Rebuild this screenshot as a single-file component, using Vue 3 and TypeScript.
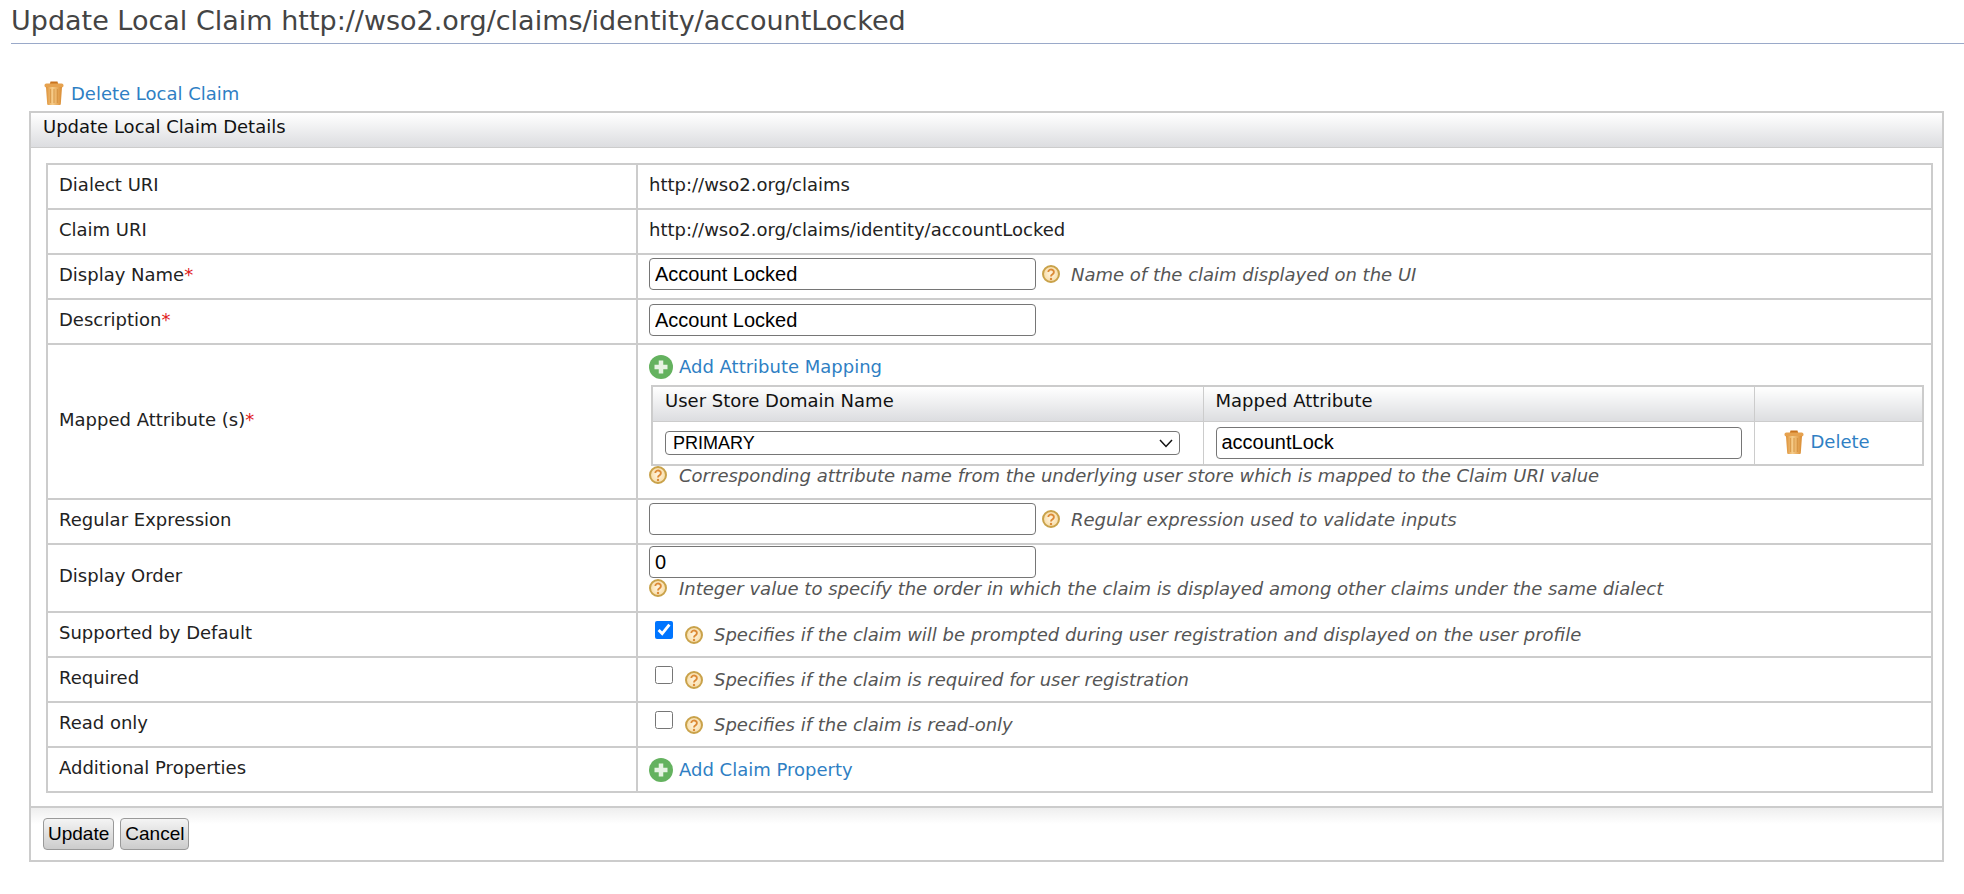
<template>
  <div class="page">
    <h2 class="title">Update Local Claim http://wso2.org/claims/identity/accountLocked</h2>
    <div class="content">
      <a class="link trash-link delete-claim">
        <svg class="trash" viewBox="0 0 20 24"><use href="#trash-icon" /></svg>
        Delete Local Claim
      </a>
      <svg class="defs" width="0" height="0">
        <defs>
          <linearGradient id="trash-body" x1="0" x2="1" y1="0" y2="0">
            <stop offset="0" stop-color="#dc8f35" />
            <stop offset="0.4" stop-color="#f6cd8b" />
            <stop offset="1" stop-color="#d98a30" />
          </linearGradient>
          <radialGradient id="help-fill">
            <stop offset="0" stop-color="#fff6e2" />
            <stop offset="1" stop-color="#f8dca6" />
          </radialGradient>
          <symbol id="trash-icon" viewBox="0 0 20 24">
            <path d="M6.500 .5h7l.8 3H5.700z" fill="#c9741f" />
            <rect x="0.5" y="2.500" width="19" height="4" rx="1.800" fill="#e6a24f" />
            <path d="M2 6h16l-1.200 17a1 1 0 0 1-1 1H4.200a1 1 0 0 1-1-1z" fill="url(#trash-body)" />
            <path d="M6.500 8v14M10 8v14M13.500 8v14" stroke="#cf8a38" stroke-width="1.200" opacity="0.6" />
          </symbol>
          <symbol id="help-icon" viewBox="0 0 18 18">
            <circle cx="9" cy="9" r="8" fill="url(#help-fill)" stroke="#c9a24a" stroke-width="2" />
            <path d="M6.300 7a2.800 2.600 0 1 1 4.200 2.300c-1 .6-1.500 1-1.500 2.200" fill="none" stroke="#dc8a36" stroke-width="1.900" />
            <circle cx="9" cy="14" r="1.200" fill="#dc8a36" />
          </symbol>
          <symbol id="add-icon" viewBox="0 0 24 24">
            <circle cx="12" cy="12" r="12" fill="#64b25f" />
            <path d="M12 5.500v13M5.500 12h13" stroke="#e6f3e3" stroke-width="4.500" />
          </symbol>
        </defs>
      </svg>

      <div class="box">
        <div class="box-header">Update Local Claim Details</div>
        <div class="box-body">
          <table class="form-table">
            <tbody>
              <tr>
                <td class="label">Dialect URI</td>
                <td>http://wso2.org/claims</td>
              </tr>
              <tr>
                <td class="label">Claim URI</td>
                <td>http://wso2.org/claims/identity/accountLocked</td>
              </tr>
              <tr>
                <td class="label">Display Name<span class="req">*</span></td>
                <td>
                  <div class="line">
                    <input class="text-input" type="text" value="Account Locked" />
                    <svg class="help"><use href="#help-icon" /></svg>
                    <span class="hint">Name of the claim displayed on the UI</span>
                  </div>
                </td>
              </tr>
              <tr>
                <td class="label">Description<span class="req">*</span></td>
                <td class="desc-cell"><input class="text-input" type="text" value="Account Locked" /></td>
              </tr>
              <tr>
                <td class="label">Mapped Attribute (s)<span class="req">*</span></td>
                <td class="mapped-cell">
                  <a class="link add-link">
                    <svg class="add"><use href="#add-icon" /></svg>
                    Add Attribute Mapping
                  </a>
                  <table class="inner-table">
                    <thead>
                      <tr>
                        <th class="col-store">User Store Domain Name</th>
                        <th class="col-attr">Mapped Attribute</th>
                        <th class="col-action"></th>
                      </tr>
                    </thead>
                    <tbody>
                      <tr>
                        <td>
                          <div class="select-wrap">
                            <select class="store-select">
                              <option>PRIMARY</option>
                            </select>
                            <svg class="chevron" viewBox="0 0 14 9"><path d="M1 1l6 6.500L13 1" fill="none" stroke="#111" stroke-width="1.500" /></svg>
                          </div>
                        </td>
                        <td><input class="attr-input" type="text" value="accountLock" /></td>
                        <td class="action-cell">
                          <a class="link trash-link">
                            <svg class="trash" viewBox="0 0 20 24"><use href="#trash-icon" /></svg>
                            Delete
                          </a>
                        </td>
                      </tr>
                    </tbody>
                  </table>
                  <div class="line hint-line">
                    <svg class="help"><use href="#help-icon" /></svg>
                    <span class="hint">Corresponding attribute name from the underlying user store which is mapped to the Claim URI value</span>
                  </div>
                </td>
              </tr>
              <tr>
                <td class="label">Regular Expression</td>
                <td>
                  <div class="line">
                    <input class="text-input" type="text" />
                    <svg class="help"><use href="#help-icon" /></svg>
                    <span class="hint">Regular expression used to validate inputs</span>
                  </div>
                </td>
              </tr>
              <tr>
                <td class="label">Display Order</td>
                <td class="order-cell">
                  <input class="text-input" type="text" value="0" />
                  <div class="line hint-line">
                    <svg class="help"><use href="#help-icon" /></svg>
                    <span class="hint">Integer value to specify the order in which the claim is displayed among other claims under the same dialect</span>
                  </div>
                </td>
              </tr>
              <tr v-for="row in checkRows" :key="row.label">
                <td class="label">{{ row.label }}</td>
                <td class="check-cell">
                  <div class="line">
                    <input class="check" type="checkbox" :checked="row.checked" />
                    <svg class="help"><use href="#help-icon" /></svg>
                    <span class="hint">{{ row.hint }}</span>
                  </div>
                </td>
              </tr>
              <tr>
                <td class="label">Additional Properties</td>
                <td class="check-cell">
                  <a class="link add-link">
                    <svg class="add"><use href="#add-icon" /></svg>
                    Add Claim Property
                  </a>
                </td>
              </tr>
            </tbody>
          </table>
        </div>
        <div class="box-footer">
          <button class="btn">Update</button>
          <button class="btn">Cancel</button>
        </div>
      </div>
    </div>
  </div>
</template>

<script setup lang="ts">
const checkRows = [
  {
    label: 'Supported by Default',
    checked: true,
    hint: 'Specifies if the claim will be prompted during user registration and displayed on the user profile',
  },
  { label: 'Required', checked: false, hint: 'Specifies if the claim is required for user registration' },
  { label: 'Read only', checked: false, hint: 'Specifies if the claim is read-only' },
]
</script>

<style>
body {
  background: #fff;
}
</style>

<style scoped>
.page {
  font-family: "DejaVu Sans", sans-serif;
  font-size: 18px;
  color: #222;
  padding-left: 11px;
}

.title {
  margin: 0;
  height: 44px;
  box-sizing: border-box;
  padding-top: 5px;
  font-size: 27px;
  line-height: 32px;
  font-weight: normal;
  color: #444;
  border-bottom: 1px solid #9aa9c9;
}

.content {
  padding: 36px 20px 0 18px;
}

.defs {
  position: absolute;
}

.link {
  color: #2f7fc4;
  display: inline-flex;
  align-items: center;
  gap: 6px;
}

.trash-link {
  gap: 7px;
}

.delete-claim {
  height: 31px;
  margin-left: 15px;
  padding-bottom: 5px;
  box-sizing: border-box;
  display: flex;
}

.trash {
  width: 20px;
  height: 24px;
}

.box {
  border: 2px solid #ccc;
  height: 751px;
  box-sizing: border-box;
  display: flex;
  flex-direction: column;
}

.box-header {
  height: 35px;
  box-sizing: border-box;
  padding: 2px 12px 0;
  line-height: 24px;
  color: #111;
  background: linear-gradient(#fff, #dcdde0);
  border-bottom: 1px solid #ccc;
}

.box-body {
  flex: 1;
  padding: 15px 9px 0 15px;
}

.form-table {
  width: 100%;
  border-collapse: collapse;
  border: 2px solid #ccc;
  table-layout: fixed;
}

.form-table > tbody > tr > td {
  border-top: 2px solid #ccc;
  height: 45px;
  box-sizing: border-box;
  padding: 0 11px 5px;
  vertical-align: middle;
  color: #222;
}

.form-table > tbody > tr > td.label {
  width: 590px;
  border-right: 2px solid #ccc;
}

.form-table > tbody > tr > td.desc-cell {
  padding-bottom: 3px;
}

.form-table > tbody > tr > td.mapped-cell {
  padding-bottom: 0;
  vertical-align: top;
}

.form-table > tbody > tr > td.order-cell {
  padding: 1px 11px 0;
  vertical-align: top;
}

.form-table > tbody > tr > td.check-cell {
  padding-bottom: 0;
}

.req {
  color: #e02020;
}

.line {
  display: flex;
  align-items: center;
  gap: 6px;
}

.text-input,
.attr-input {
  height: 32px;
  box-sizing: border-box;
  padding: 0 5px;
  border: 1px solid #767676;
  border-radius: 4px;
  font-family: "Liberation Sans", sans-serif;
  font-size: 20px;
  color: #000;
  display: block;
}

.text-input {
  width: 387px;
}

.attr-input {
  width: 526px;
}

.help {
  width: 18px;
  height: 18px;
  flex: none;
}

.hint {
  font-style: italic;
  color: #555;
  margin-left: 5px;
}

.hint-line .hint {
  margin-left: 6px;
}

.order-cell .hint-line {
  height: 20px;
  margin-bottom: 13px;
}

.mapped-cell .hint-line {
  height: 18px;
  margin-bottom: 14px;
}

.add-link {
  display: flex;
}

.add {
  width: 24px;
  height: 24px;
}

.mapped-cell .add-link {
  height: 40px;
  padding-top: 3px;
  box-sizing: border-box;
}

.inner-table {
  width: 1273px;
  margin-left: 2px;
  border-collapse: collapse;
  border: 2px solid #ccc;
  table-layout: fixed;
}

.inner-table th {
  height: 35px;
  box-sizing: border-box;
  padding: 0 12px 6px;
  text-align: left;
  font-weight: normal;
  color: #111;
  background: linear-gradient(#fff, #dcdde0);
  border-right: 1px solid #ccc;
  border-bottom: 1px solid #ccc;
}

.inner-table td {
  height: 44px;
  box-sizing: border-box;
  padding: 0 12px;
  border-right: 1px solid #ccc;
}

.col-store {
  width: 551px;
}

.col-attr {
  width: 551px;
}

.select-wrap {
  position: relative;
  width: 515px;
}

.store-select {
  width: 515px;
  height: 24px;
  display: block;
  padding: 0 7px;
  appearance: none;
  border: 1px solid #767676;
  border-radius: 4px;
  background: #fff;
  font-family: "Liberation Sans", sans-serif;
  font-size: 18px;
  color: #000;
}

.chevron {
  position: absolute;
  right: 7px;
  top: 8px;
  width: 14px;
  height: 9px;
}

.inner-table td.action-cell {
  padding: 2px 0 0 29px;
}

.check {
  width: 18px;
  height: 18px;
  margin: 0 6px 9px 6px;
  flex: none;
}

.box-footer {
  height: 54px;
  box-sizing: border-box;
  padding: 10px 12px;
  border-top: 2px solid #ccc;
  background: linear-gradient(#eee, #fff 16px);
  display: flex;
  gap: 6px;
}

.btn {
  height: 32px;
  padding: 0 4px;
  border: 1px solid #999;
  border-radius: 4px;
  background: linear-gradient(#f4f4f4, #ccc);
  font-family: "Liberation Sans", sans-serif;
  font-size: 19px;
  color: #000;
}
</style>
